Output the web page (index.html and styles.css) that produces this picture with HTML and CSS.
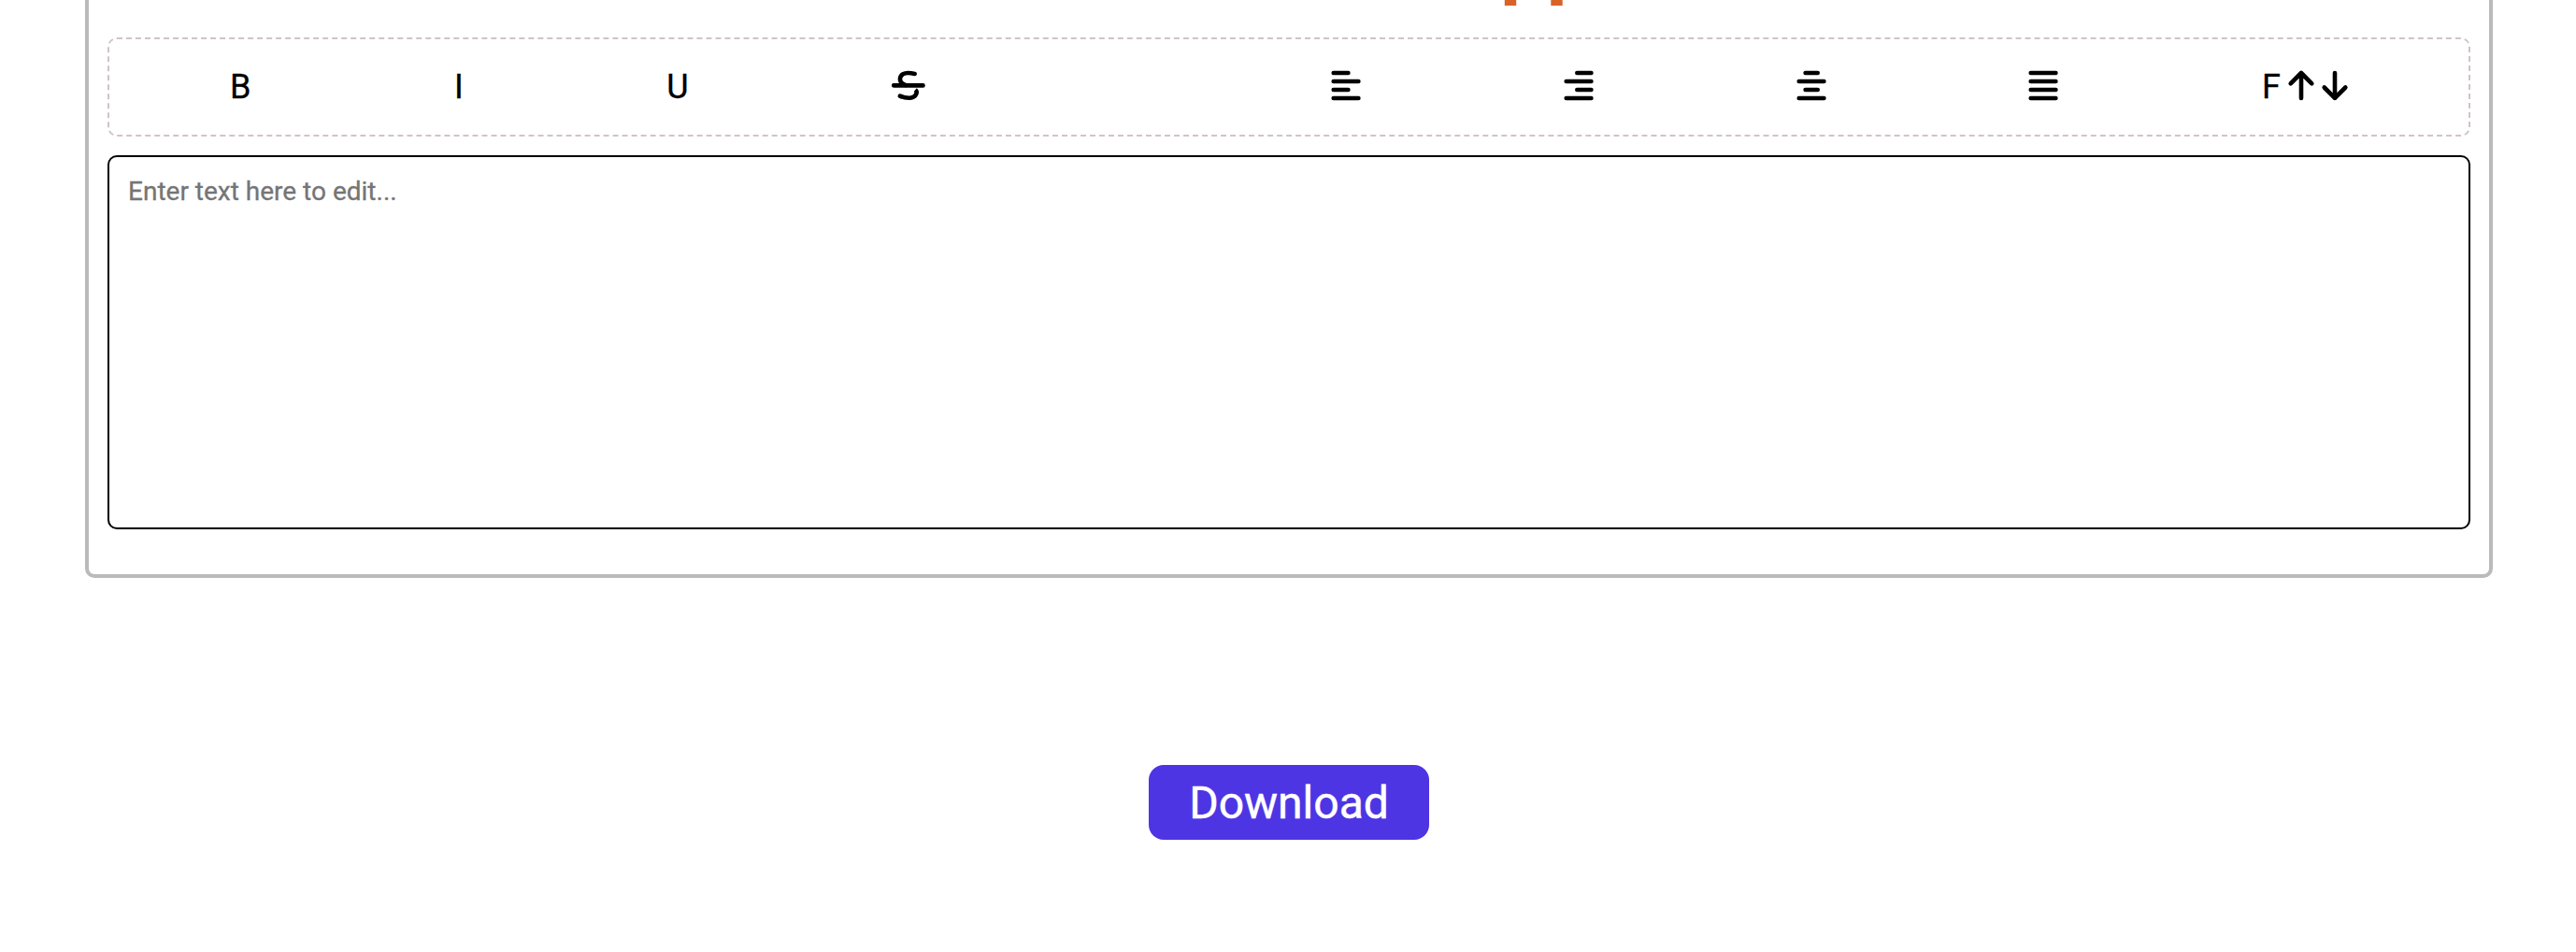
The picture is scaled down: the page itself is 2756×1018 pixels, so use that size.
FILE: index.html
```
<!DOCTYPE html>
<html lang="en">
<head>
<meta charset="utf-8">
<title>Text Editor App</title>
<link rel="stylesheet" href="styles.css">
</head>
<body>
<main class="editor">
  <h1 class="title">Text Editor App</h1>
  <div class="toolbar">
    <div class="group styles">
      <button class="tool">B</button>
      <button class="tool">I</button>
      <button class="tool">U</button>
      <button class="tool" aria-label="Strikethrough"><svg class="icon" viewBox="0 0 36 36"><path d="M2.2 17.4H33.5"/><path d="M24.7 5C20 3.8 15 3.4 12 5.2C8.2 7.6 7.8 12.6 11.5 15.4L15 17"/><path class="butt" d="M25.3 22C28.3 24.5 26 30 19.5 30.8C15 31 12 30 8.8 28.7"/><path d="M8.8 28.7L10 29.1"/></svg></button>
    </div>
    <div class="group aligns">
      <button class="tool" aria-label="Align left"><svg class="icon" viewBox="0 0 36 36"><path d="M4.7 4H20.4M4.7 13H31.4M4.7 22H20.4M4.7 31H31.4"/></svg></button>
      <button class="tool" aria-label="Align right"><svg class="icon" viewBox="0 0 36 36"><path d="M16.3 4H31.4M4.7 13H31.4M16.3 22H31.4M4.7 31H31.4"/></svg></button>
      <button class="tool" aria-label="Align center"><svg class="icon" viewBox="0 0 36 36"><path d="M11.6 4H24.7M4.7 13H31.4M11.6 22H24.7M4.7 31H31.4"/></svg></button>
      <button class="tool" aria-label="Justify"><svg class="icon" viewBox="0 0 36 36"><path d="M4.7 4H31.4M4.7 13H31.4M4.7 22H31.4M4.7 31H31.4"/></svg></button>
      <button class="tool size">F<svg class="icon" viewBox="0 0 36 36"><path d="M18 31V4M6.7 15.3L18 4L29.3 15.3"/></svg><svg class="icon" viewBox="0 0 36 36"><path d="M18 4V31M6.7 19.5L18 30.8L29.3 19.5"/></svg></button>
    </div>
  </div>
  <textarea class="text" placeholder="Enter text here to edit..."></textarea>
</main>
<button class="download">Download</button>
</body>
</html>
```
FILE: styles.css
```
* { box-sizing: border-box; }
html { height: 100%; overflow: hidden; }
body {
  margin: 0;
  height: 100%;
  overflow: hidden;
  display: flex;
  flex-direction: column;
  align-items: center;
  background: #fff;
  font-family: Roboto, sans-serif;
}
.editor {
  width: 2576px;
  height: 618px;
  margin-left: 2px;
  flex: none;
  padding: 0 20px;
  border: 4px solid #bababa;
  border-top: 0;
  border-radius: 0 0 10px 10px;
  display: flex;
  flex-direction: column;
}
.title {
  margin: -92px 0 0;
  height: 132px;
  flex: none;
  padding-left: 45px;
  line-height: 100px;
  text-align: center;
  font-size: 88px;
  font-weight: 700;
  color: #d96327;
}
.toolbar {
  height: 106px;
  flex: none;
  padding: 0 125px 0 129px;
  border: 2px dashed #d0c4c6;
  border-radius: 10px;
  display: flex;
  justify-content: space-between;
}
.group { display: flex; justify-content: space-between; align-items: center; }
.styles { width: 744px; }
.aligns { width: 1094px; }
.tool {
  padding: 0;
  border: 0;
  background: none;
  color: #000;
  font: 400 36px/42px Roboto, sans-serif;
  -webkit-text-stroke: 0.3px;
  display: flex;
  align-items: center;
}
.size { margin-left: 3px; }
.size svg:first-of-type { margin-left: 4px; }
.icon {
  width: 36px;
  height: 36px;
  margin-bottom: 2px;
  fill: none;
  stroke: #000;
  stroke-width: 4.6;
  stroke-linecap: round;
  stroke-linejoin: round;
}
.butt { stroke-linecap: butt; }
.text {
  display: block;
  height: 400px;
  margin: 20px 0 0;
  flex: none;
  padding: 20px;
  resize: none;
  outline: 0;
  border: 2px solid #000;
  border-radius: 10px;
  background: #fff;
  font: 400 28px/33px Roboto, sans-serif;
}
.text::placeholder { color: #757575; -webkit-text-stroke: 0.3px; }
.download {
  width: 300px;
  height: 80px;
  flex: none;
  margin-top: 200px;
  margin-left: 2px;
  padding: 2px 0 0;
  border: 0;
  border-radius: 16px;
  background: #4d35e4;
  color: #fff;
  font: 400 48px/56px Roboto, sans-serif;
  -webkit-text-stroke: 0.5px;
}
```
